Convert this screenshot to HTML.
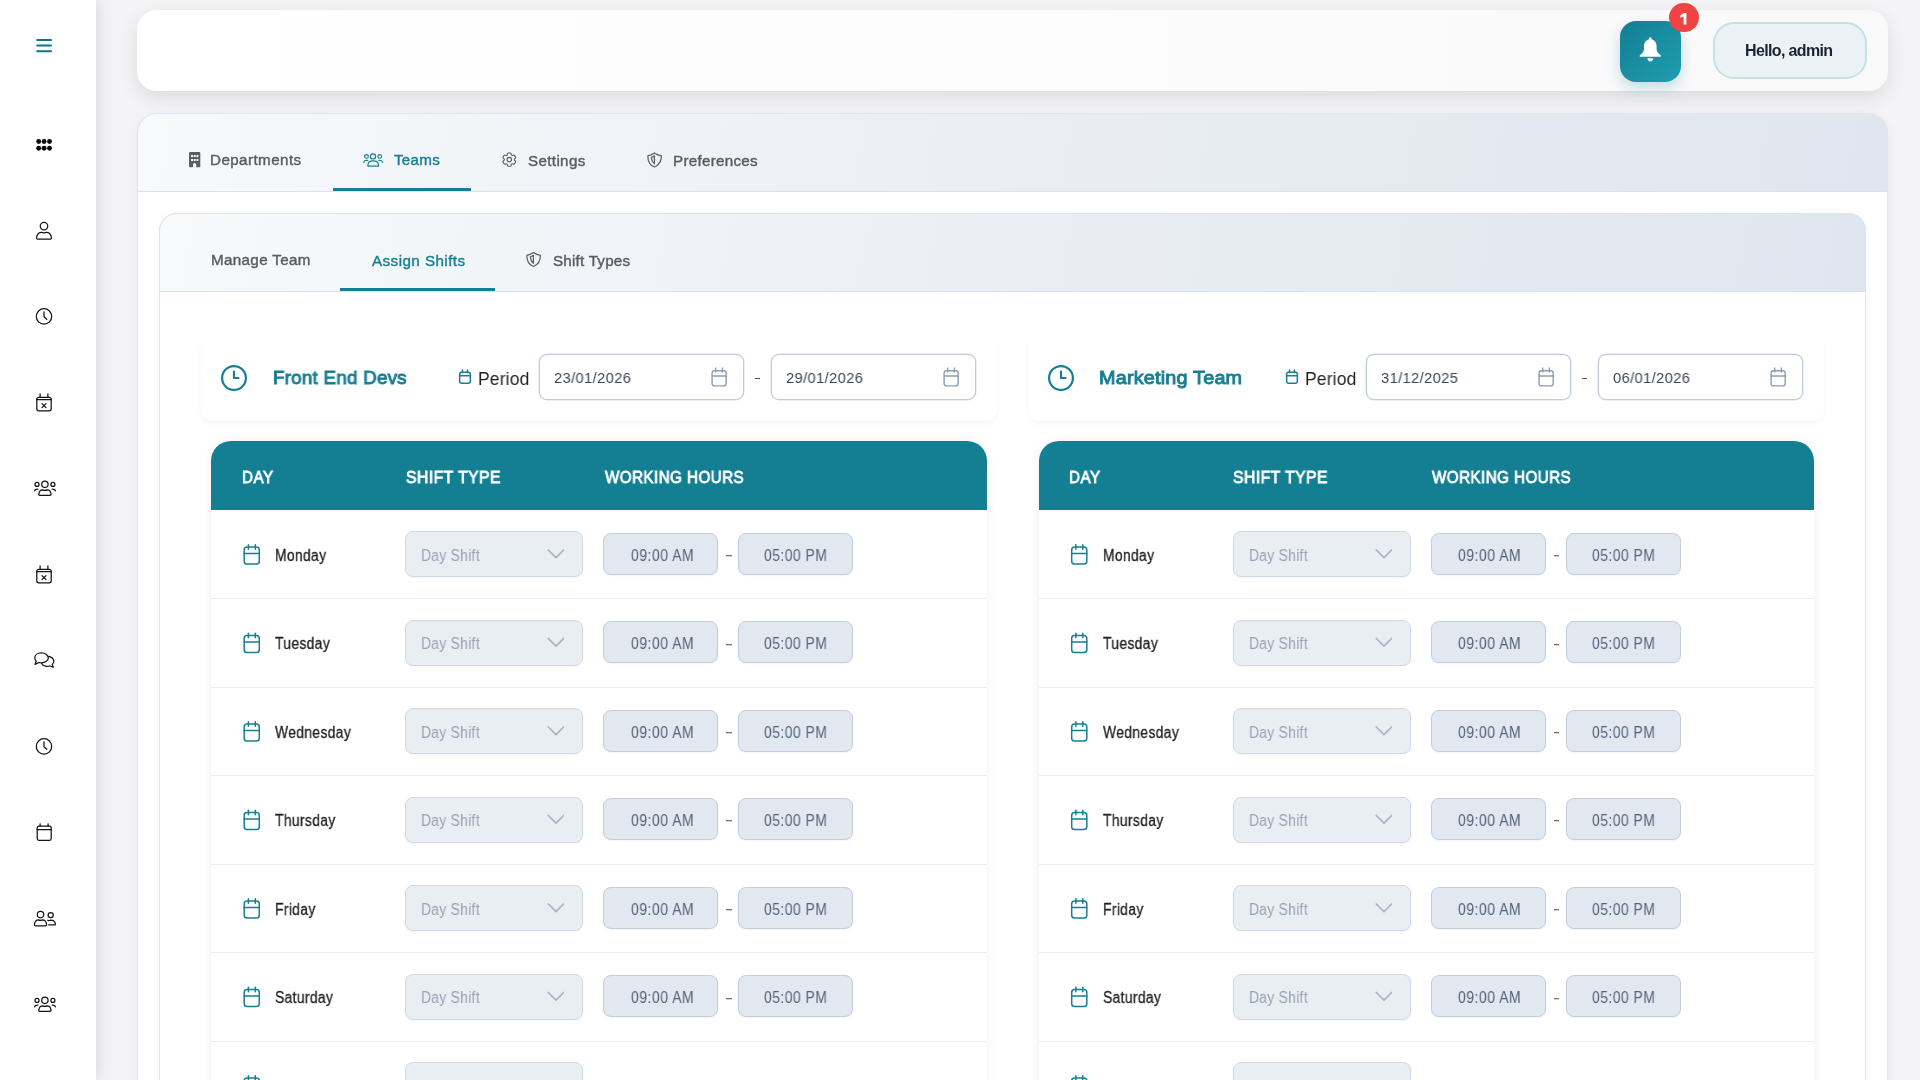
<!DOCTYPE html>
<html><head><meta charset="utf-8">
<style>
*{box-sizing:border-box;margin:0;padding:0}
html,body{width:1920px;height:1080px;overflow:hidden}
body{background:#f4f4f6;font-family:"Liberation Sans",sans-serif;position:relative}
.abs{position:absolute}
#side{left:0;top:0;width:96px;height:1080px;background:#fff;box-shadow:3px 0 14px rgba(0,0,0,.10)}
#hdr{left:137px;top:10px;width:1751px;height:81px;border-radius:20px;background:linear-gradient(90deg,#fff,#f9f9fa);box-shadow:0 7px 20px rgba(0,0,0,.10)}
#bell{left:1620px;top:21px;width:61px;height:61px;border-radius:16px;background:linear-gradient(135deg,#137e93,#209db0);box-shadow:0 6px 14px rgba(23,135,155,.25)}
#badge{left:1669.3px;top:2.8px;width:29.6px;height:29.6px;border-radius:50%;background:#ef4444;color:#fff;font-weight:bold;font-size:15px;text-align:center;line-height:30px}
#hello{left:1712.5px;top:22px;width:154.5px;height:57px;border-radius:21px;border:2.5px solid #c6e0e5;background:#ebf2f5;color:#1e293b;font-weight:bold;font-size:15px;text-align:center;line-height:53px}
#outer{left:137px;top:113px;width:1751px;height:1000px;border-radius:20px 20px 0 0;background:#fff;border:1px solid #e3e8ef;box-shadow:0 3px 12px rgba(0,0,0,.055)}
#otabs{left:137px;top:113px;width:1751px;height:79px;border-radius:20px 20px 0 0;background:linear-gradient(100deg,#f7f9fb,#e9edf3 55%,#e0e6ef);border:1px solid #e1e6ee;border-bottom-color:#dbe1ea}
.tab{font-size:15px;font-weight:bold;color:#555b63;white-space:nowrap;line-height:18px}
.tab.act{color:#177f93}
.uline{height:3px;background:#177f93}
#inner{left:159px;top:213px;width:1707px;height:1000px;border-radius:18px 18px 0 0;background:#fff;border:1px solid #dfe5ed;box-shadow:0 2px 10px rgba(0,0,0,.03)}
#itabs{left:159px;top:213px;width:1707px;height:79px;border-radius:18px 18px 0 0;background:linear-gradient(100deg,#f7f9fb,#e9edf3 55%,#e0e6ef);border:1px solid #dce4ee;border-bottom-color:#dbe1ea}
.thead{height:87px;border-radius:12px;background:#fff;box-shadow:0 3px 6px rgba(0,0,0,.035)}
.tname{font-size:20px;font-weight:bold;color:#177f93;white-space:nowrap;line-height:24px}
.period{font-size:18px;color:#222;white-space:nowrap;line-height:20px}
.date{width:205px;height:46px;border-radius:8px;border:1px solid #bfcbdc;box-shadow:0 0 0 .5px rgba(191,203,220,.6);background:#fff;font-size:15px;color:#3b4657;line-height:43px;padding-left:15px}
.dash{font-size:15px;color:#6b7280;line-height:18px}
.table{width:776px;height:700px;background:#fff;border-radius:20px 20px 0 0;box-shadow:0 0 10px rgba(0,0,0,.07)}
.th{height:69px;background:#147f92;border-radius:20px 20px 0 0}
.th span{position:absolute;top:0;line-height:69px;color:#fff;font-size:17px;font-weight:bold}
.row{height:89px;border-bottom:1px solid #ebecee}
.dname{line-height:88px;font-size:15px;color:#222}
.sel{width:178px;height:46px;border-radius:8px;background:#e9eef3;border:1px solid #d0d9e5;box-shadow:0 1px 2px rgba(0,0,0,.04);color:#98a3b3;font-size:15px;line-height:44px;padding-left:17px}
.tm{width:115px;height:42px;border-radius:8px;background:#e2e8f0;border:1px solid #c3cddb;box-shadow:0 1px 2px rgba(0,0,0,.05);color:#56657a;font-size:15px;line-height:40px;text-align:center}
.t{position:absolute;line-height:1;white-space:nowrap;will-change:transform}

</style></head><body>
<div id="side" class="abs"></div>
<svg class="abs" style="left:30px;top:34px" width="28" height="24" viewBox="30 34 28 24" fill="none" stroke="#0b7689" stroke-width="2" stroke-linecap="round"><line x1="37.2" y1="40" x2="51" y2="40"/><line x1="37.2" y1="45.6" x2="51" y2="45.6"/><line x1="37.2" y1="51.3" x2="51" y2="51.3"/></svg>
<svg class="abs" style="left:30px;top:134px" width="28" height="22" viewBox="30 134 28 22" fill="#0a0a0a"><circle cx="38.7" cy="141.5" r="2.45"/><circle cx="38.7" cy="148.2" r="2.45"/><circle cx="44.1" cy="141.5" r="2.45"/><circle cx="44.1" cy="148.2" r="2.45"/><circle cx="49.5" cy="141.5" r="2.45"/><circle cx="49.5" cy="148.2" r="2.45"/></svg>
<svg class="abs" style="left:30px;top:218px" width="28" height="26" viewBox="30 218 28 26" fill="none" stroke="#141414" stroke-width="1.25" stroke-linecap="round" stroke-linejoin="round"><circle cx="44" cy="226.1" r="3.75"/><path d="M37.4 239 C36.6 239 36.3 238.4 36.6 237.2 C37.2 234 39.3 232.3 41.6 232.3 C42.6 232.9 45.4 232.9 46.4 232.3 C48.7 232.3 50.8 234 51.4 237.2 C51.7 238.4 51.4 239 50.6 239 Z"/></svg>
<svg class="abs" style="left:30px;top:304px" width="28" height="24" viewBox="30 304 28 24" fill="none" stroke="#141414" stroke-width="1.25" stroke-linecap="round" stroke-linejoin="round"><circle cx="44" cy="316.4" r="7.7"/><polyline points="44,311.79999999999995 44,316.7 46.8,319.29999999999995"/></svg>
<svg class="abs" style="left:30px;top:389px" width="28" height="26" viewBox="30 389 28 26" fill="none" stroke="#141414" stroke-width="1.25" stroke-linecap="round" stroke-linejoin="round"><rect x="36.8" y="397.3" width="14.4" height="13.5" rx="2"/><line x1="36.8" y1="399.7" x2="51.2" y2="399.7"/><line x1="40.1" y1="393.90000000000003" x2="40.1" y2="396.90000000000003"/><line x1="47.9" y1="393.90000000000003" x2="47.9" y2="396.90000000000003"/><line x1="42" y1="403.6" x2="46" y2="407.6"/><line x1="46" y1="403.6" x2="42" y2="407.6"/></svg>
<svg class="abs" style="left:28px;top:476px" width="32" height="24" viewBox="28 476 32 24" fill="none" stroke="#141414" stroke-width="1.25" stroke-linecap="round" stroke-linejoin="round"><circle cx="44.9" cy="484.3" r="3.2"/><circle cx="37" cy="484.40000000000003" r="2.0"/><circle cx="52.9" cy="484.40000000000003" r="2.0"/><path d="M39.8 495.3 C38.9 495.3 38.7 494.8 38.9 493.6 C39.3 491.2 40.8 489.90000000000003 42.6 489.90000000000003 C43.8 490.40000000000003 46 490.40000000000003 47.2 489.90000000000003 C49 489.90000000000003 50.5 491.2 50.9 493.6 C51.1 494.8 50.9 495.3 50 495.3 Z"/><path d="M34.6 490.90000000000003 C34.9 489.7 36 489.1 37.8 489.1"/><path d="M55.4 490.90000000000003 C55.1 489.7 54 489.1 52.2 489.1"/></svg>
<svg class="abs" style="left:30px;top:561px" width="28" height="26" viewBox="30 561 28 26" fill="none" stroke="#141414" stroke-width="1.25" stroke-linecap="round" stroke-linejoin="round"><rect x="36.8" y="569.3" width="14.4" height="13.5" rx="2"/><line x1="36.8" y1="571.6999999999999" x2="51.2" y2="571.6999999999999"/><line x1="40.1" y1="565.9" x2="40.1" y2="568.9"/><line x1="47.9" y1="565.9" x2="47.9" y2="568.9"/><line x1="42" y1="575.5999999999999" x2="46" y2="579.5999999999999"/><line x1="46" y1="575.5999999999999" x2="42" y2="579.5999999999999"/></svg>
<svg class="abs" style="left:30px;top:648px" width="28" height="24" viewBox="30 648 28 24" fill="none" stroke="#141414" stroke-width="1.25" stroke-linecap="round" stroke-linejoin="round"><path d="M41.3 652.9 C45.5 652.9 48.3 655.2 48.3 657.9 C48.3 660.6 45.5 662.8 41.3 662.8 C40.5 662.8 39.7 662.7 39 662.5 L35 664.4 L36.2 661.2 C35.3 660.3 34.8 659.2 34.8 657.9 C34.8 655.2 37.2 652.9 41.3 652.9 Z"/><path d="M48.6 656.3 C51.7 657 53.8 659 53.8 661.3 C53.8 662.6 53.2 663.7 52.2 664.6 L53.4 667.2 L49.9 666 C49.1 666.3 48.2 666.4 47.3 666.4 C44.6 666.4 42.4 665.2 41.6 663.3"/></svg>
<svg class="abs" style="left:30px;top:734px" width="28" height="24" viewBox="30 734 28 24" fill="none" stroke="#141414" stroke-width="1.25" stroke-linecap="round" stroke-linejoin="round"><circle cx="44" cy="746.4" r="7.7"/><polyline points="44,741.8 44,746.6999999999999 46.8,749.3"/></svg>
<svg class="abs" style="left:30px;top:819px" width="28" height="26" viewBox="30 819 28 26" fill="none" stroke="#141414" stroke-width="1.25" stroke-linecap="round" stroke-linejoin="round"><rect x="37.2" y="826.0999999999999" width="14" height="14.2" rx="1.8"/><line x1="37.2" y1="829.5999999999999" x2="51.2" y2="829.5999999999999"/><line x1="40.1" y1="823.8" x2="40.1" y2="826.3"/><line x1="48.1" y1="823.8" x2="48.1" y2="826.3"/></svg>
<svg class="abs" style="left:30px;top:906px" width="30" height="24" viewBox="30 906 30 24" fill="none" stroke="#141414" stroke-width="1.25" stroke-linecap="round" stroke-linejoin="round"><circle cx="40.5" cy="914.6" r="3.2"/><path d="M35.6 925.9 C34.6 925.9 34.3 925.3 34.5 924.1 C34.9 921.4 36.5 919.9 38.4 919.9 C39.6 920.5 41.4 920.5 42.6 919.9 C44.5 919.9 46.1 921.4 46.5 924.1 C46.7 925.3 46.4 925.9 45.4 925.9 Z"/><circle cx="50.7" cy="915.1" r="2.6"/><path d="M47.8 920.3 C48.6 920.6 49.6 920.6 50.6 920.2 C53 920.2 54.9 921.6 55.4 923.6 C55.6 924.5 55.2 924.9 54.6 924.9 H48.7"/></svg>
<svg class="abs" style="left:28px;top:992px" width="32" height="24" viewBox="28 992 32 24" fill="none" stroke="#141414" stroke-width="1.25" stroke-linecap="round" stroke-linejoin="round"><circle cx="44.9" cy="1000.3" r="3.2"/><circle cx="37" cy="1000.4" r="2.0"/><circle cx="52.9" cy="1000.4" r="2.0"/><path d="M39.8 1011.3 C38.9 1011.3 38.7 1010.8 38.9 1009.5999999999999 C39.3 1007.1999999999999 40.8 1005.9 42.6 1005.9 C43.8 1006.4 46 1006.4 47.2 1005.9 C49 1005.9 50.5 1007.1999999999999 50.9 1009.5999999999999 C51.1 1010.8 50.9 1011.3 50 1011.3 Z"/><path d="M34.6 1006.9 C34.9 1005.6999999999999 36 1005.0999999999999 37.8 1005.0999999999999"/><path d="M55.4 1006.9 C55.1 1005.6999999999999 54 1005.0999999999999 52.2 1005.0999999999999"/></svg>
<div id="hdr" class="abs"></div>
<div id="bell" class="abs"></div>
<svg class="abs" style="left:1636px;top:34px" width="30" height="30" viewBox="1636 34 30 30" fill="#fff"><path d="M1650.3 37.2 C1651.1 37.2 1651.6 37.8 1651.6 38.5 V39.3 C1654.8 40.1 1656.6 42.9 1656.6 46.1 V49.2 C1656.6 51.6 1658.4 53.5 1660.4 54.9 C1661.3 55.5 1661 56.8 1660 56.8 H1640.6 C1639.6 56.8 1639.3 55.5 1640.2 54.9 C1642.2 53.5 1644 51.6 1644 49.2 V46.1 C1644 42.9 1645.8 40.1 1649 39.3 V38.5 C1649 37.8 1649.5 37.2 1650.3 37.2 Z M1647.3 58.2 H1653.3 C1653.3 60 1651.9 61.6 1650.3 61.6 C1648.7 61.6 1647.3 60 1647.3 58.2 Z"/></svg>
<div id="badge" class="abs"></div>
<svg class="abs" style="left:1676px;top:10px" width="16" height="18" viewBox="1676 10 16 18" fill="#fff"><path d="M1683.6 13 H1686.4 V24.5 H1683.6 V16.6 L1680.3 17.8 V15.4 Z"/></svg>
<div id="hello" class="abs"></div>
<div class="t " style="left:1745.0px;top:42.66px;font-size:16px;color:#1a2233;font-weight:bold;letter-spacing:-0.64px;">Hello, admin</div>
<div id="outer" class="abs"></div><div id="otabs" class="abs"></div>
<div class="uline abs" style="left:333px;top:188px;width:138px"></div>
<svg class="abs" style="left:187px;top:150px" width="16" height="20" viewBox="187 150 16 20" fill="#5b5e63"><path fill-rule="evenodd" d="M190 151.9 H199.3 A1 1 0 0 1 200.3 152.9 V166.2 A1 1 0 0 1 199.3 167.2 H196.2 V164.6 A1.6 1.6 0 0 0 193 164.6 V167.2 H190 A1 1 0 0 1 189 166.2 V152.9 A1 1 0 0 1 190 151.9 Z M191 154.9 V157 H193 V154.9 Z M193.7 154.9 V157 H195.7 V154.9 Z M196.4 154.9 V157 H198.4 V154.9 Z M191 158.9 V161 H193 V158.9 Z M193.7 158.9 V161 H195.7 V158.9 Z M196.4 158.9 V161 H198.4 V158.9 Z"/></svg>
<div class="t " style="left:209.9px;top:152.13px;font-size:15.2px;color:#585c62;font-weight:normal;letter-spacing:0.42px;-webkit-text-stroke:0.4px #585c62;">Departments</div>
<svg class="abs" style="left:358px;top:145px" width="30" height="30" viewBox="358 145 30 30" fill="none" stroke="#177f93" stroke-width="1.2" stroke-linecap="round" stroke-linejoin="round"><circle cx="373" cy="156.4" r="2.6"/><circle cx="366.5" cy="156.4" r="1.85"/><circle cx="379.7" cy="156.4" r="1.85"/><path d="M368 166.2 V164.6 C368 162.3 370 160.9 373.2 160.9 C376.4 160.9 378.4 162.3 378.4 164.6 V166.2 Z"/><path d="M363.8 162.4 C364 161.2 364.8 160.4 366.2 160.4 H367.6"/><path d="M382.6 162.4 C382.4 161.2 381.6 160.4 380.2 160.4 H378.8"/></svg>
<div class="t " style="left:393.5px;top:152.13px;font-size:15.2px;color:#177f93;font-weight:normal;letter-spacing:0.25px;-webkit-text-stroke:0.4px #177f93;">Teams</div>
<svg class="abs" style="left:498px;top:148px" width="24" height="24" viewBox="498 148 24 24" fill="none" stroke="#5b5e63" stroke-width="1.5" stroke-linejoin="round"><g transform="translate(509.3 159.6) scale(0.74) translate(-12 -12)"><path d="M9.594 3.94c.09-.542.56-.94 1.11-.94h2.593c.55 0 1.02.398 1.11.94l.213 1.281c.063.374.313.686.645.87.074.04.147.083.22.127.325.196.72.257 1.075.124l1.217-.456a1.125 1.125 0 0 1 1.37.49l1.296 2.247a1.125 1.125 0 0 1-.26 1.431l-1.003.827c-.293.241-.438.613-.43.992a7.723 7.723 0 0 1 0 .255c-.008.378.137.75.43.991l1.004.827c.424.35.534.955.26 1.43l-1.298 2.247a1.125 1.125 0 0 1-1.369.491l-1.217-.456c-.355-.133-.75-.072-1.076.124a6.47 6.47 0 0 1-.22.128c-.331.183-.581.495-.644.869l-.213 1.281c-.09.543-.56.94-1.11.94h-2.594c-.55 0-1.019-.398-1.11-.94l-.213-1.281c-.062-.374-.312-.686-.644-.87a6.52 6.52 0 0 1-.22-.127c-.325-.196-.72-.257-1.076-.124l-1.217.456a1.125 1.125 0 0 1-1.369-.49l-1.297-2.247a1.125 1.125 0 0 1 .26-1.431l1.004-.827c.292-.24.437-.613.43-.991a6.932 6.932 0 0 1 0-.255c.007-.38-.138-.751-.43-.992l-1.004-.827a1.125 1.125 0 0 1-.26-1.43l1.297-2.247a1.125 1.125 0 0 1 1.37-.491l1.216.456c.356.133.751.072 1.076-.124.072-.044.146-.086.22-.128.332-.183.582-.495.644-.869l.214-1.28Z"/><circle cx="12" cy="12" r="3"/></g></svg>
<div class="t " style="left:528.4px;top:153.13px;font-size:15.2px;color:#585c62;font-weight:normal;letter-spacing:0.346px;-webkit-text-stroke:0.4px #585c62;">Settings</div>
<svg class="abs" style="left:645px;top:150px" width="20" height="20" viewBox="645 150 20 20" fill="none" stroke="#5b5e63" stroke-width="1.25" stroke-linejoin="round"><path d="M654.4 153.0 C656.4 154.39999999999998 658.7 155.5 661.4 155.79999999999998 C661.4 161.5 658.7 165.39999999999998 654.4 167.0 C650.1 165.39999999999998 647.8000000000001 161.5 647.8000000000001 155.79999999999998 C650.1 155.5 652.4 154.39999999999998 654.4 153.0 Z"/><path d="M654.4 155.79999999999998 V163.79999999999998 C652.7 162.39999999999998 651.5 160.2 651.3000000000001 157.39999999999998 C652.4 157.1 653.4 156.5 654.4 155.79999999999998 Z"/></svg>
<div class="t " style="left:673.2px;top:153.13px;font-size:15.2px;color:#585c62;font-weight:normal;letter-spacing:0.28px;-webkit-text-stroke:0.4px #585c62;">Preferences</div>
<div id="inner" class="abs"></div><div id="itabs" class="abs"></div>
<div class="uline abs" style="left:340px;top:288px;width:155px"></div>
<div class="t " style="left:210.7px;top:251.93px;font-size:15.2px;color:#585c62;font-weight:normal;letter-spacing:0.34px;-webkit-text-stroke:0.4px #585c62;">Manage Team</div>
<div class="t " style="left:371.5px;top:252.93px;font-size:15.2px;color:#177f93;font-weight:normal;letter-spacing:0.443px;-webkit-text-stroke:0.4px #177f93;">Assign Shifts</div>
<svg class="abs" style="left:524px;top:249px" width="20" height="20" viewBox="524 249 20 20" fill="none" stroke="#5b5e63" stroke-width="1.25" stroke-linejoin="round"><path d="M533.4 252.5 C535.4 253.89999999999998 537.7 255.0 540.4 255.29999999999998 C540.4 261.0 537.7 264.9 533.4 266.5 C529.1 264.9 526.8000000000001 261.0 526.8000000000001 255.29999999999998 C529.1 255.0 531.4 253.89999999999998 533.4 252.5 Z"/><path d="M533.4 255.29999999999998 V263.3 C531.7 261.9 530.5 259.7 530.3000000000001 256.9 C531.4 256.59999999999997 532.4 256.0 533.4 255.29999999999998 Z"/></svg>
<div class="t " style="left:552.9px;top:252.93px;font-size:15.2px;color:#585c62;font-weight:normal;letter-spacing:0.22px;-webkit-text-stroke:0.4px #585c62;">Shift Types</div>
<div class="thead abs" style="left:201px;top:334px;width:796px"></div>
<svg class="abs" style="left:221px;top:364.5px" width="26" height="26" viewBox="0 0 26 26" fill="none" stroke="#177f93" stroke-width="2.2" stroke-linecap="round" stroke-linejoin="round"><circle cx="13" cy="13" r="11.9"/><polyline points="13,6.5 13,13 17.5,13"/></svg>
<div class="t " style="left:272.5px;top:367.62px;font-size:19px;color:#177f93;font-weight:normal;letter-spacing:0.2px;transform:scaleX(0.9929);transform-origin:0 0;-webkit-text-stroke:0.95px #177f93;">Front End Devs</div>
<svg class="abs" style="left:456px;top:367px" width="18" height="20" viewBox="456 367 18 20" fill="none" stroke="#177f93" stroke-width="1.5" stroke-linecap="round"><rect x="459.65" y="372.15" width="10.70" height="11.00" rx="2"/><line x1="459.65" y1="375.7" x2="470.35" y2="375.7"/><line x1="462.5" y1="370" x2="462.5" y2="372.8"/><line x1="467.4" y1="370" x2="467.4" y2="372.8"/></svg>
<div class="t " style="left:478.2px;top:370.63px;font-size:17.8px;color:#1f1f1f;font-weight:normal;letter-spacing:0.2px;transform:scaleX(0.9798);transform-origin:0 0;">Period</div>
<div class="date abs" style="left:539px;top:354px"></div>
<div class="t " style="left:554.0px;top:369.80px;font-size:15px;color:#3a4556;font-weight:normal;letter-spacing:0.4px;transform:scaleX(0.9786);transform-origin:0 0;">23/01/2026</div>
<svg class="abs" style="left:709px;top:365px" width="21" height="24" viewBox="709 365 21 24" fill="none" stroke="#8d9db6" stroke-width="1.4" stroke-linecap="round"><rect x="712.1" y="370.7" width="14.10" height="15.20" rx="2.4"/><line x1="712.1" y1="376" x2="726.2" y2="376"/><line x1="715.7" y1="368" x2="715.7" y2="372"/><line x1="722.4" y1="368" x2="722.4" y2="372"/></svg>
<div class="date abs" style="left:771px;top:354px"></div>
<div class="t " style="left:786.0px;top:369.80px;font-size:15px;color:#3a4556;font-weight:normal;letter-spacing:0.4px;transform:scaleX(0.9786);transform-origin:0 0;">29/01/2026</div>
<svg class="abs" style="left:941px;top:365px" width="21" height="24" viewBox="941 365 21 24" fill="none" stroke="#8d9db6" stroke-width="1.4" stroke-linecap="round"><rect x="944.1" y="370.7" width="14.10" height="15.20" rx="2.4"/><line x1="944.1" y1="376" x2="958.2" y2="376"/><line x1="947.7" y1="368" x2="947.7" y2="372"/><line x1="954.4" y1="368" x2="954.4" y2="372"/></svg>
<div class="abs" style="left:755px;top:377.8px;width:5.2px;height:1.5px;background:#4d4f5c"></div>
<div class="thead abs" style="left:1028px;top:334px;width:796px"></div>
<svg class="abs" style="left:1048px;top:364.5px" width="26" height="26" viewBox="0 0 26 26" fill="none" stroke="#177f93" stroke-width="2.2" stroke-linecap="round" stroke-linejoin="round"><circle cx="13" cy="13" r="11.9"/><polyline points="13,6.5 13,13 17.5,13"/></svg>
<div class="t " style="left:1099.2px;top:367.62px;font-size:19px;color:#177f93;font-weight:normal;letter-spacing:0.2px;transform:scaleX(1.0411);transform-origin:0 0;-webkit-text-stroke:0.95px #177f93;">Marketing Team</div>
<svg class="abs" style="left:1283px;top:367px" width="18" height="20" viewBox="1283 367 18 20" fill="none" stroke="#177f93" stroke-width="1.5" stroke-linecap="round"><rect x="1286.65" y="372.15" width="10.70" height="11.00" rx="2"/><line x1="1286.65" y1="375.7" x2="1297.35" y2="375.7"/><line x1="1289.5" y1="370" x2="1289.5" y2="372.8"/><line x1="1294.4" y1="370" x2="1294.4" y2="372.8"/></svg>
<div class="t " style="left:1305.2px;top:370.63px;font-size:17.8px;color:#1f1f1f;font-weight:normal;letter-spacing:0.2px;transform:scaleX(0.9798);transform-origin:0 0;">Period</div>
<div class="date abs" style="left:1366px;top:354px"></div>
<div class="t " style="left:1381.0px;top:369.80px;font-size:15px;color:#3a4556;font-weight:normal;letter-spacing:0.4px;transform:scaleX(0.9786);transform-origin:0 0;">31/12/2025</div>
<svg class="abs" style="left:1536px;top:365px" width="21" height="24" viewBox="1536 365 21 24" fill="none" stroke="#8d9db6" stroke-width="1.4" stroke-linecap="round"><rect x="1539.1" y="370.7" width="14.10" height="15.20" rx="2.4"/><line x1="1539.1" y1="376" x2="1553.2" y2="376"/><line x1="1542.7" y1="368" x2="1542.7" y2="372"/><line x1="1549.4" y1="368" x2="1549.4" y2="372"/></svg>
<div class="date abs" style="left:1598px;top:354px"></div>
<div class="t " style="left:1613.0px;top:369.80px;font-size:15px;color:#3a4556;font-weight:normal;letter-spacing:0.4px;transform:scaleX(0.9786);transform-origin:0 0;">06/01/2026</div>
<svg class="abs" style="left:1768px;top:365px" width="21" height="24" viewBox="1768 365 21 24" fill="none" stroke="#8d9db6" stroke-width="1.4" stroke-linecap="round"><rect x="1771.1" y="370.7" width="14.10" height="15.20" rx="2.4"/><line x1="1771.1" y1="376" x2="1785.2" y2="376"/><line x1="1774.7" y1="368" x2="1774.7" y2="372"/><line x1="1781.4" y1="368" x2="1781.4" y2="372"/></svg>
<div class="abs" style="left:1582px;top:377.8px;width:5.2px;height:1.5px;background:#4d4f5c"></div>
<div class="table abs" style="left:211px;top:441px;width:776px"></div>
<div class="th abs" style="left:211px;top:441px;width:776px"></div>
<div class="t " style="left:241.8px;top:468.83px;font-size:16.5px;color:#fff;font-weight:normal;letter-spacing:0.5px;transform:scaleX(0.9211);transform-origin:0 0;-webkit-text-stroke:0.8px #fff;">DAY</div>
<div class="t " style="left:405.8px;top:468.83px;font-size:16.5px;color:#fff;font-weight:normal;letter-spacing:0.5px;transform:scaleX(0.9517);transform-origin:0 0;-webkit-text-stroke:0.8px #fff;">SHIFT TYPE</div>
<div class="t " style="left:604.8px;top:468.83px;font-size:16.5px;color:#fff;font-weight:normal;letter-spacing:0.5px;transform:scaleX(0.919);transform-origin:0 0;-webkit-text-stroke:0.8px #fff;">WORKING HOURS</div>
<div class="row abs" style="left:211px;top:510.0px;width:776px"></div>
<svg class="abs" style="left:241px;top:541px" width="22" height="27" viewBox="241 541 22 27" fill="none" stroke="#177f93" stroke-width="1.5" stroke-linecap="round"><rect x="244.2" y="547.1" width="15.10" height="16.90" rx="2.8"/><line x1="244.2" y1="553.4" x2="259.3" y2="553.4"/><line x1="248.4" y1="544.7" x2="248.4" y2="549.2"/><line x1="255.3" y1="544.7" x2="255.3" y2="549.2"/></svg>
<div class="t " style="left:275.1px;top:548.46px;font-size:16px;color:#222;font-weight:normal;letter-spacing:0.4px;transform:scaleX(0.8667);transform-origin:0 0;-webkit-text-stroke:0.3px #222;">Monday</div>
<div class="sel abs" style="left:405px;top:531.0px"></div>
<div class="t " style="left:421.2px;top:547.63px;font-size:15.8px;color:#96a1b3;font-weight:normal;letter-spacing:0.4px;transform:scaleX(0.8707);transform-origin:0 0;">Day Shift</div>
<svg class="abs" style="left:544px;top:546px" width="20" height="14" viewBox="544 546 20 14" fill="none" stroke="#a8b4c5" stroke-width="1.7" stroke-linecap="round" stroke-linejoin="round"><polyline points="548.3,550.0 556,557.6 563.6,550.0"/></svg>
<div class="tm abs" style="left:603px;top:532.8px"></div>
<div class="t " style="left:630.5px;top:548.46px;font-size:16px;color:#536278;font-weight:normal;letter-spacing:0.6px;transform:scaleX(0.8717);transform-origin:0 0;">09:00 AM</div>
<div class="abs" style="left:726px;top:555px;width:5.5px;height:1px;background:#6d7380;box-shadow:0 1px 0 rgba(109,115,128,.3)"></div>
<div class="tm abs" style="left:738px;top:532.8px"></div>
<div class="t " style="left:764.2px;top:548.46px;font-size:16px;color:#536278;font-weight:normal;letter-spacing:0.6px;transform:scaleX(0.8652);transform-origin:0 0;">05:00 PM</div>
<div class="row abs" style="left:211px;top:598.5px;width:776px"></div>
<svg class="abs" style="left:241px;top:630px" width="22" height="26" viewBox="241 630 22 26" fill="none" stroke="#177f93" stroke-width="1.5" stroke-linecap="round"><rect x="244.2" y="635.6" width="15.10" height="16.90" rx="2.8"/><line x1="244.2" y1="641.9" x2="259.3" y2="641.9"/><line x1="248.4" y1="633.2" x2="248.4" y2="637.7"/><line x1="255.3" y1="633.2" x2="255.3" y2="637.7"/></svg>
<div class="t " style="left:275.1px;top:636.46px;font-size:16px;color:#222;font-weight:normal;letter-spacing:0.4px;transform:scaleX(0.8667);transform-origin:0 0;-webkit-text-stroke:0.3px #222;">Tuesday</div>
<div class="sel abs" style="left:405px;top:619.5px"></div>
<div class="t " style="left:421.2px;top:635.63px;font-size:15.8px;color:#96a1b3;font-weight:normal;letter-spacing:0.4px;transform:scaleX(0.8707);transform-origin:0 0;">Day Shift</div>
<svg class="abs" style="left:544px;top:634px" width="20" height="14" viewBox="544 634 20 14" fill="none" stroke="#a8b4c5" stroke-width="1.7" stroke-linecap="round" stroke-linejoin="round"><polyline points="548.3,638.5 556,646.1 563.6,638.5"/></svg>
<div class="tm abs" style="left:603px;top:621.3px"></div>
<div class="t " style="left:630.5px;top:636.46px;font-size:16px;color:#536278;font-weight:normal;letter-spacing:0.6px;transform:scaleX(0.8717);transform-origin:0 0;">09:00 AM</div>
<div class="abs" style="left:726px;top:644px;width:5.5px;height:1px;background:#6d7380;box-shadow:0 1px 0 rgba(109,115,128,.3)"></div>
<div class="tm abs" style="left:738px;top:621.3px"></div>
<div class="t " style="left:764.2px;top:636.46px;font-size:16px;color:#536278;font-weight:normal;letter-spacing:0.6px;transform:scaleX(0.8652);transform-origin:0 0;">05:00 PM</div>
<div class="row abs" style="left:211px;top:687.0px;width:776px"></div>
<svg class="abs" style="left:241px;top:718px" width="22" height="27" viewBox="241 718 22 27" fill="none" stroke="#177f93" stroke-width="1.5" stroke-linecap="round"><rect x="244.2" y="724.1" width="15.10" height="16.90" rx="2.8"/><line x1="244.2" y1="730.4" x2="259.3" y2="730.4"/><line x1="248.4" y1="721.7" x2="248.4" y2="726.2"/><line x1="255.3" y1="721.7" x2="255.3" y2="726.2"/></svg>
<div class="t " style="left:275.1px;top:725.46px;font-size:16px;color:#222;font-weight:normal;letter-spacing:0.4px;transform:scaleX(0.8667);transform-origin:0 0;-webkit-text-stroke:0.3px #222;">Wednesday</div>
<div class="sel abs" style="left:405px;top:708.0px"></div>
<div class="t " style="left:421.2px;top:724.63px;font-size:15.8px;color:#96a1b3;font-weight:normal;letter-spacing:0.4px;transform:scaleX(0.8707);transform-origin:0 0;">Day Shift</div>
<svg class="abs" style="left:544px;top:723px" width="20" height="14" viewBox="544 723 20 14" fill="none" stroke="#a8b4c5" stroke-width="1.7" stroke-linecap="round" stroke-linejoin="round"><polyline points="548.3,727.0 556,734.6 563.6,727.0"/></svg>
<div class="tm abs" style="left:603px;top:709.8px"></div>
<div class="t " style="left:630.5px;top:725.46px;font-size:16px;color:#536278;font-weight:normal;letter-spacing:0.6px;transform:scaleX(0.8717);transform-origin:0 0;">09:00 AM</div>
<div class="abs" style="left:726px;top:732px;width:5.5px;height:1px;background:#6d7380;box-shadow:0 1px 0 rgba(109,115,128,.3)"></div>
<div class="tm abs" style="left:738px;top:709.8px"></div>
<div class="t " style="left:764.2px;top:725.46px;font-size:16px;color:#536278;font-weight:normal;letter-spacing:0.6px;transform:scaleX(0.8652);transform-origin:0 0;">05:00 PM</div>
<div class="row abs" style="left:211px;top:775.5px;width:776px"></div>
<svg class="abs" style="left:241px;top:807px" width="22" height="26" viewBox="241 807 22 26" fill="none" stroke="#177f93" stroke-width="1.5" stroke-linecap="round"><rect x="244.2" y="812.6" width="15.10" height="16.90" rx="2.8"/><line x1="244.2" y1="818.9" x2="259.3" y2="818.9"/><line x1="248.4" y1="810.2" x2="248.4" y2="814.7"/><line x1="255.3" y1="810.2" x2="255.3" y2="814.7"/></svg>
<div class="t " style="left:275.1px;top:813.46px;font-size:16px;color:#222;font-weight:normal;letter-spacing:0.4px;transform:scaleX(0.8667);transform-origin:0 0;-webkit-text-stroke:0.3px #222;">Thursday</div>
<div class="sel abs" style="left:405px;top:796.5px"></div>
<div class="t " style="left:421.2px;top:812.63px;font-size:15.8px;color:#96a1b3;font-weight:normal;letter-spacing:0.4px;transform:scaleX(0.8707);transform-origin:0 0;">Day Shift</div>
<svg class="abs" style="left:544px;top:811px" width="20" height="14" viewBox="544 811 20 14" fill="none" stroke="#a8b4c5" stroke-width="1.7" stroke-linecap="round" stroke-linejoin="round"><polyline points="548.3,815.5 556,823.1 563.6,815.5"/></svg>
<div class="tm abs" style="left:603px;top:798.3px"></div>
<div class="t " style="left:630.5px;top:813.46px;font-size:16px;color:#536278;font-weight:normal;letter-spacing:0.6px;transform:scaleX(0.8717);transform-origin:0 0;">09:00 AM</div>
<div class="abs" style="left:726px;top:820px;width:5.5px;height:1px;background:#6d7380;box-shadow:0 1px 0 rgba(109,115,128,.3)"></div>
<div class="tm abs" style="left:738px;top:798.3px"></div>
<div class="t " style="left:764.2px;top:813.46px;font-size:16px;color:#536278;font-weight:normal;letter-spacing:0.6px;transform:scaleX(0.8652);transform-origin:0 0;">05:00 PM</div>
<div class="row abs" style="left:211px;top:864.0px;width:776px"></div>
<svg class="abs" style="left:241px;top:895px" width="22" height="27" viewBox="241 895 22 27" fill="none" stroke="#177f93" stroke-width="1.5" stroke-linecap="round"><rect x="244.2" y="901.1" width="15.10" height="16.90" rx="2.8"/><line x1="244.2" y1="907.4" x2="259.3" y2="907.4"/><line x1="248.4" y1="898.7" x2="248.4" y2="903.2"/><line x1="255.3" y1="898.7" x2="255.3" y2="903.2"/></svg>
<div class="t " style="left:275.1px;top:902.46px;font-size:16px;color:#222;font-weight:normal;letter-spacing:0.4px;transform:scaleX(0.8667);transform-origin:0 0;-webkit-text-stroke:0.3px #222;">Friday</div>
<div class="sel abs" style="left:405px;top:885.0px"></div>
<div class="t " style="left:421.2px;top:901.63px;font-size:15.8px;color:#96a1b3;font-weight:normal;letter-spacing:0.4px;transform:scaleX(0.8707);transform-origin:0 0;">Day Shift</div>
<svg class="abs" style="left:544px;top:900px" width="20" height="14" viewBox="544 900 20 14" fill="none" stroke="#a8b4c5" stroke-width="1.7" stroke-linecap="round" stroke-linejoin="round"><polyline points="548.3,904.0 556,911.6 563.6,904.0"/></svg>
<div class="tm abs" style="left:603px;top:886.8px"></div>
<div class="t " style="left:630.5px;top:902.46px;font-size:16px;color:#536278;font-weight:normal;letter-spacing:0.6px;transform:scaleX(0.8717);transform-origin:0 0;">09:00 AM</div>
<div class="abs" style="left:726px;top:909px;width:5.5px;height:1px;background:#6d7380;box-shadow:0 1px 0 rgba(109,115,128,.3)"></div>
<div class="tm abs" style="left:738px;top:886.8px"></div>
<div class="t " style="left:764.2px;top:902.46px;font-size:16px;color:#536278;font-weight:normal;letter-spacing:0.6px;transform:scaleX(0.8652);transform-origin:0 0;">05:00 PM</div>
<div class="row abs" style="left:211px;top:952.5px;width:776px"></div>
<svg class="abs" style="left:241px;top:984px" width="22" height="26" viewBox="241 984 22 26" fill="none" stroke="#177f93" stroke-width="1.5" stroke-linecap="round"><rect x="244.2" y="989.6" width="15.10" height="16.90" rx="2.8"/><line x1="244.2" y1="995.9" x2="259.3" y2="995.9"/><line x1="248.4" y1="987.2" x2="248.4" y2="991.7"/><line x1="255.3" y1="987.2" x2="255.3" y2="991.7"/></svg>
<div class="t " style="left:275.1px;top:990.46px;font-size:16px;color:#222;font-weight:normal;letter-spacing:0.4px;transform:scaleX(0.8667);transform-origin:0 0;-webkit-text-stroke:0.3px #222;">Saturday</div>
<div class="sel abs" style="left:405px;top:973.5px"></div>
<div class="t " style="left:421.2px;top:989.63px;font-size:15.8px;color:#96a1b3;font-weight:normal;letter-spacing:0.4px;transform:scaleX(0.8707);transform-origin:0 0;">Day Shift</div>
<svg class="abs" style="left:544px;top:988px" width="20" height="14" viewBox="544 988 20 14" fill="none" stroke="#a8b4c5" stroke-width="1.7" stroke-linecap="round" stroke-linejoin="round"><polyline points="548.3,992.5 556,1000.1 563.6,992.5"/></svg>
<div class="tm abs" style="left:603px;top:975.3px"></div>
<div class="t " style="left:630.5px;top:990.46px;font-size:16px;color:#536278;font-weight:normal;letter-spacing:0.6px;transform:scaleX(0.8717);transform-origin:0 0;">09:00 AM</div>
<div class="abs" style="left:726px;top:998px;width:5.5px;height:1px;background:#6d7380;box-shadow:0 1px 0 rgba(109,115,128,.3)"></div>
<div class="tm abs" style="left:738px;top:975.3px"></div>
<div class="t " style="left:764.2px;top:990.46px;font-size:16px;color:#536278;font-weight:normal;letter-spacing:0.6px;transform:scaleX(0.8652);transform-origin:0 0;">05:00 PM</div>
<div class="row abs" style="left:211px;top:1041.0px;width:776px"></div>
<svg class="abs" style="left:241px;top:1072px" width="22" height="27" viewBox="241 1072 22 27" fill="none" stroke="#177f93" stroke-width="1.5" stroke-linecap="round"><rect x="244.2" y="1078.1" width="15.10" height="16.90" rx="2.8"/><line x1="244.2" y1="1084.4" x2="259.3" y2="1084.4"/><line x1="248.4" y1="1075.7" x2="248.4" y2="1080.2"/><line x1="255.3" y1="1075.7" x2="255.3" y2="1080.2"/></svg>
<div class="sel abs" style="left:405px;top:1062.0px"></div>
<div class="t " style="left:421.2px;top:1078.63px;font-size:15.8px;color:#96a1b3;font-weight:normal;letter-spacing:0.4px;transform:scaleX(0.8707);transform-origin:0 0;">Day Shift</div>
<svg class="abs" style="left:544px;top:1077px" width="20" height="14" viewBox="544 1077 20 14" fill="none" stroke="#a8b4c5" stroke-width="1.7" stroke-linecap="round" stroke-linejoin="round"><polyline points="548.3,1081.0 556,1088.6 563.6,1081.0"/></svg>
<div class="table abs" style="left:1038.5px;top:441px;width:775px"></div>
<div class="th abs" style="left:1038.5px;top:441px;width:775px"></div>
<div class="t " style="left:1069.3px;top:468.83px;font-size:16.5px;color:#fff;font-weight:normal;letter-spacing:0.5px;transform:scaleX(0.9211);transform-origin:0 0;-webkit-text-stroke:0.8px #fff;">DAY</div>
<div class="t " style="left:1233.3px;top:468.83px;font-size:16.5px;color:#fff;font-weight:normal;letter-spacing:0.5px;transform:scaleX(0.9517);transform-origin:0 0;-webkit-text-stroke:0.8px #fff;">SHIFT TYPE</div>
<div class="t " style="left:1432.3px;top:468.83px;font-size:16.5px;color:#fff;font-weight:normal;letter-spacing:0.5px;transform:scaleX(0.919);transform-origin:0 0;-webkit-text-stroke:0.8px #fff;">WORKING HOURS</div>
<div class="row abs" style="left:1038.5px;top:510.0px;width:775px"></div>
<svg class="abs" style="left:1068px;top:541px" width="22" height="27" viewBox="1068 541 22 27" fill="none" stroke="#177f93" stroke-width="1.5" stroke-linecap="round"><rect x="1071.7" y="547.1" width="15.10" height="16.90" rx="2.8"/><line x1="1071.7" y1="553.4" x2="1086.8" y2="553.4"/><line x1="1075.9" y1="544.7" x2="1075.9" y2="549.2"/><line x1="1082.8" y1="544.7" x2="1082.8" y2="549.2"/></svg>
<div class="t " style="left:1102.6px;top:548.46px;font-size:16px;color:#222;font-weight:normal;letter-spacing:0.4px;transform:scaleX(0.8667);transform-origin:0 0;-webkit-text-stroke:0.3px #222;">Monday</div>
<div class="sel abs" style="left:1232.5px;top:531.0px"></div>
<div class="t " style="left:1248.7px;top:547.63px;font-size:15.8px;color:#96a1b3;font-weight:normal;letter-spacing:0.4px;transform:scaleX(0.8707);transform-origin:0 0;">Day Shift</div>
<svg class="abs" style="left:1371.5px;top:546px" width="20" height="14" viewBox="1371.5 546 20 14" fill="none" stroke="#a8b4c5" stroke-width="1.7" stroke-linecap="round" stroke-linejoin="round"><polyline points="1375.8,550.0 1383.5,557.6 1391.1,550.0"/></svg>
<div class="tm abs" style="left:1430.5px;top:532.8px"></div>
<div class="t " style="left:1458.0px;top:548.46px;font-size:16px;color:#536278;font-weight:normal;letter-spacing:0.6px;transform:scaleX(0.8717);transform-origin:0 0;">09:00 AM</div>
<div class="abs" style="left:1553.5px;top:555px;width:5.5px;height:1px;background:#6d7380;box-shadow:0 1px 0 rgba(109,115,128,.3)"></div>
<div class="tm abs" style="left:1565.5px;top:532.8px"></div>
<div class="t " style="left:1591.7px;top:548.46px;font-size:16px;color:#536278;font-weight:normal;letter-spacing:0.6px;transform:scaleX(0.8652);transform-origin:0 0;">05:00 PM</div>
<div class="row abs" style="left:1038.5px;top:598.5px;width:775px"></div>
<svg class="abs" style="left:1068px;top:630px" width="22" height="26" viewBox="1068 630 22 26" fill="none" stroke="#177f93" stroke-width="1.5" stroke-linecap="round"><rect x="1071.7" y="635.6" width="15.10" height="16.90" rx="2.8"/><line x1="1071.7" y1="641.9" x2="1086.8" y2="641.9"/><line x1="1075.9" y1="633.2" x2="1075.9" y2="637.7"/><line x1="1082.8" y1="633.2" x2="1082.8" y2="637.7"/></svg>
<div class="t " style="left:1102.6px;top:636.46px;font-size:16px;color:#222;font-weight:normal;letter-spacing:0.4px;transform:scaleX(0.8667);transform-origin:0 0;-webkit-text-stroke:0.3px #222;">Tuesday</div>
<div class="sel abs" style="left:1232.5px;top:619.5px"></div>
<div class="t " style="left:1248.7px;top:635.63px;font-size:15.8px;color:#96a1b3;font-weight:normal;letter-spacing:0.4px;transform:scaleX(0.8707);transform-origin:0 0;">Day Shift</div>
<svg class="abs" style="left:1371.5px;top:634px" width="20" height="14" viewBox="1371.5 634 20 14" fill="none" stroke="#a8b4c5" stroke-width="1.7" stroke-linecap="round" stroke-linejoin="round"><polyline points="1375.8,638.5 1383.5,646.1 1391.1,638.5"/></svg>
<div class="tm abs" style="left:1430.5px;top:621.3px"></div>
<div class="t " style="left:1458.0px;top:636.46px;font-size:16px;color:#536278;font-weight:normal;letter-spacing:0.6px;transform:scaleX(0.8717);transform-origin:0 0;">09:00 AM</div>
<div class="abs" style="left:1553.5px;top:644px;width:5.5px;height:1px;background:#6d7380;box-shadow:0 1px 0 rgba(109,115,128,.3)"></div>
<div class="tm abs" style="left:1565.5px;top:621.3px"></div>
<div class="t " style="left:1591.7px;top:636.46px;font-size:16px;color:#536278;font-weight:normal;letter-spacing:0.6px;transform:scaleX(0.8652);transform-origin:0 0;">05:00 PM</div>
<div class="row abs" style="left:1038.5px;top:687.0px;width:775px"></div>
<svg class="abs" style="left:1068px;top:718px" width="22" height="27" viewBox="1068 718 22 27" fill="none" stroke="#177f93" stroke-width="1.5" stroke-linecap="round"><rect x="1071.7" y="724.1" width="15.10" height="16.90" rx="2.8"/><line x1="1071.7" y1="730.4" x2="1086.8" y2="730.4"/><line x1="1075.9" y1="721.7" x2="1075.9" y2="726.2"/><line x1="1082.8" y1="721.7" x2="1082.8" y2="726.2"/></svg>
<div class="t " style="left:1102.6px;top:725.46px;font-size:16px;color:#222;font-weight:normal;letter-spacing:0.4px;transform:scaleX(0.8667);transform-origin:0 0;-webkit-text-stroke:0.3px #222;">Wednesday</div>
<div class="sel abs" style="left:1232.5px;top:708.0px"></div>
<div class="t " style="left:1248.7px;top:724.63px;font-size:15.8px;color:#96a1b3;font-weight:normal;letter-spacing:0.4px;transform:scaleX(0.8707);transform-origin:0 0;">Day Shift</div>
<svg class="abs" style="left:1371.5px;top:723px" width="20" height="14" viewBox="1371.5 723 20 14" fill="none" stroke="#a8b4c5" stroke-width="1.7" stroke-linecap="round" stroke-linejoin="round"><polyline points="1375.8,727.0 1383.5,734.6 1391.1,727.0"/></svg>
<div class="tm abs" style="left:1430.5px;top:709.8px"></div>
<div class="t " style="left:1458.0px;top:725.46px;font-size:16px;color:#536278;font-weight:normal;letter-spacing:0.6px;transform:scaleX(0.8717);transform-origin:0 0;">09:00 AM</div>
<div class="abs" style="left:1553.5px;top:732px;width:5.5px;height:1px;background:#6d7380;box-shadow:0 1px 0 rgba(109,115,128,.3)"></div>
<div class="tm abs" style="left:1565.5px;top:709.8px"></div>
<div class="t " style="left:1591.7px;top:725.46px;font-size:16px;color:#536278;font-weight:normal;letter-spacing:0.6px;transform:scaleX(0.8652);transform-origin:0 0;">05:00 PM</div>
<div class="row abs" style="left:1038.5px;top:775.5px;width:775px"></div>
<svg class="abs" style="left:1068px;top:807px" width="22" height="26" viewBox="1068 807 22 26" fill="none" stroke="#177f93" stroke-width="1.5" stroke-linecap="round"><rect x="1071.7" y="812.6" width="15.10" height="16.90" rx="2.8"/><line x1="1071.7" y1="818.9" x2="1086.8" y2="818.9"/><line x1="1075.9" y1="810.2" x2="1075.9" y2="814.7"/><line x1="1082.8" y1="810.2" x2="1082.8" y2="814.7"/></svg>
<div class="t " style="left:1102.6px;top:813.46px;font-size:16px;color:#222;font-weight:normal;letter-spacing:0.4px;transform:scaleX(0.8667);transform-origin:0 0;-webkit-text-stroke:0.3px #222;">Thursday</div>
<div class="sel abs" style="left:1232.5px;top:796.5px"></div>
<div class="t " style="left:1248.7px;top:812.63px;font-size:15.8px;color:#96a1b3;font-weight:normal;letter-spacing:0.4px;transform:scaleX(0.8707);transform-origin:0 0;">Day Shift</div>
<svg class="abs" style="left:1371.5px;top:811px" width="20" height="14" viewBox="1371.5 811 20 14" fill="none" stroke="#a8b4c5" stroke-width="1.7" stroke-linecap="round" stroke-linejoin="round"><polyline points="1375.8,815.5 1383.5,823.1 1391.1,815.5"/></svg>
<div class="tm abs" style="left:1430.5px;top:798.3px"></div>
<div class="t " style="left:1458.0px;top:813.46px;font-size:16px;color:#536278;font-weight:normal;letter-spacing:0.6px;transform:scaleX(0.8717);transform-origin:0 0;">09:00 AM</div>
<div class="abs" style="left:1553.5px;top:820px;width:5.5px;height:1px;background:#6d7380;box-shadow:0 1px 0 rgba(109,115,128,.3)"></div>
<div class="tm abs" style="left:1565.5px;top:798.3px"></div>
<div class="t " style="left:1591.7px;top:813.46px;font-size:16px;color:#536278;font-weight:normal;letter-spacing:0.6px;transform:scaleX(0.8652);transform-origin:0 0;">05:00 PM</div>
<div class="row abs" style="left:1038.5px;top:864.0px;width:775px"></div>
<svg class="abs" style="left:1068px;top:895px" width="22" height="27" viewBox="1068 895 22 27" fill="none" stroke="#177f93" stroke-width="1.5" stroke-linecap="round"><rect x="1071.7" y="901.1" width="15.10" height="16.90" rx="2.8"/><line x1="1071.7" y1="907.4" x2="1086.8" y2="907.4"/><line x1="1075.9" y1="898.7" x2="1075.9" y2="903.2"/><line x1="1082.8" y1="898.7" x2="1082.8" y2="903.2"/></svg>
<div class="t " style="left:1102.6px;top:902.46px;font-size:16px;color:#222;font-weight:normal;letter-spacing:0.4px;transform:scaleX(0.8667);transform-origin:0 0;-webkit-text-stroke:0.3px #222;">Friday</div>
<div class="sel abs" style="left:1232.5px;top:885.0px"></div>
<div class="t " style="left:1248.7px;top:901.63px;font-size:15.8px;color:#96a1b3;font-weight:normal;letter-spacing:0.4px;transform:scaleX(0.8707);transform-origin:0 0;">Day Shift</div>
<svg class="abs" style="left:1371.5px;top:900px" width="20" height="14" viewBox="1371.5 900 20 14" fill="none" stroke="#a8b4c5" stroke-width="1.7" stroke-linecap="round" stroke-linejoin="round"><polyline points="1375.8,904.0 1383.5,911.6 1391.1,904.0"/></svg>
<div class="tm abs" style="left:1430.5px;top:886.8px"></div>
<div class="t " style="left:1458.0px;top:902.46px;font-size:16px;color:#536278;font-weight:normal;letter-spacing:0.6px;transform:scaleX(0.8717);transform-origin:0 0;">09:00 AM</div>
<div class="abs" style="left:1553.5px;top:909px;width:5.5px;height:1px;background:#6d7380;box-shadow:0 1px 0 rgba(109,115,128,.3)"></div>
<div class="tm abs" style="left:1565.5px;top:886.8px"></div>
<div class="t " style="left:1591.7px;top:902.46px;font-size:16px;color:#536278;font-weight:normal;letter-spacing:0.6px;transform:scaleX(0.8652);transform-origin:0 0;">05:00 PM</div>
<div class="row abs" style="left:1038.5px;top:952.5px;width:775px"></div>
<svg class="abs" style="left:1068px;top:984px" width="22" height="26" viewBox="1068 984 22 26" fill="none" stroke="#177f93" stroke-width="1.5" stroke-linecap="round"><rect x="1071.7" y="989.6" width="15.10" height="16.90" rx="2.8"/><line x1="1071.7" y1="995.9" x2="1086.8" y2="995.9"/><line x1="1075.9" y1="987.2" x2="1075.9" y2="991.7"/><line x1="1082.8" y1="987.2" x2="1082.8" y2="991.7"/></svg>
<div class="t " style="left:1102.6px;top:990.46px;font-size:16px;color:#222;font-weight:normal;letter-spacing:0.4px;transform:scaleX(0.8667);transform-origin:0 0;-webkit-text-stroke:0.3px #222;">Saturday</div>
<div class="sel abs" style="left:1232.5px;top:973.5px"></div>
<div class="t " style="left:1248.7px;top:989.63px;font-size:15.8px;color:#96a1b3;font-weight:normal;letter-spacing:0.4px;transform:scaleX(0.8707);transform-origin:0 0;">Day Shift</div>
<svg class="abs" style="left:1371.5px;top:988px" width="20" height="14" viewBox="1371.5 988 20 14" fill="none" stroke="#a8b4c5" stroke-width="1.7" stroke-linecap="round" stroke-linejoin="round"><polyline points="1375.8,992.5 1383.5,1000.1 1391.1,992.5"/></svg>
<div class="tm abs" style="left:1430.5px;top:975.3px"></div>
<div class="t " style="left:1458.0px;top:990.46px;font-size:16px;color:#536278;font-weight:normal;letter-spacing:0.6px;transform:scaleX(0.8717);transform-origin:0 0;">09:00 AM</div>
<div class="abs" style="left:1553.5px;top:998px;width:5.5px;height:1px;background:#6d7380;box-shadow:0 1px 0 rgba(109,115,128,.3)"></div>
<div class="tm abs" style="left:1565.5px;top:975.3px"></div>
<div class="t " style="left:1591.7px;top:990.46px;font-size:16px;color:#536278;font-weight:normal;letter-spacing:0.6px;transform:scaleX(0.8652);transform-origin:0 0;">05:00 PM</div>
<div class="row abs" style="left:1038.5px;top:1041.0px;width:775px"></div>
<svg class="abs" style="left:1068px;top:1072px" width="22" height="27" viewBox="1068 1072 22 27" fill="none" stroke="#177f93" stroke-width="1.5" stroke-linecap="round"><rect x="1071.7" y="1078.1" width="15.10" height="16.90" rx="2.8"/><line x1="1071.7" y1="1084.4" x2="1086.8" y2="1084.4"/><line x1="1075.9" y1="1075.7" x2="1075.9" y2="1080.2"/><line x1="1082.8" y1="1075.7" x2="1082.8" y2="1080.2"/></svg>
<div class="sel abs" style="left:1232.5px;top:1062.0px"></div>
<div class="t " style="left:1248.7px;top:1078.63px;font-size:15.8px;color:#96a1b3;font-weight:normal;letter-spacing:0.4px;transform:scaleX(0.8707);transform-origin:0 0;">Day Shift</div>
<svg class="abs" style="left:1371.5px;top:1077px" width="20" height="14" viewBox="1371.5 1077 20 14" fill="none" stroke="#a8b4c5" stroke-width="1.7" stroke-linecap="round" stroke-linejoin="round"><polyline points="1375.8,1081.0 1383.5,1088.6 1391.1,1081.0"/></svg>
</body></html>
